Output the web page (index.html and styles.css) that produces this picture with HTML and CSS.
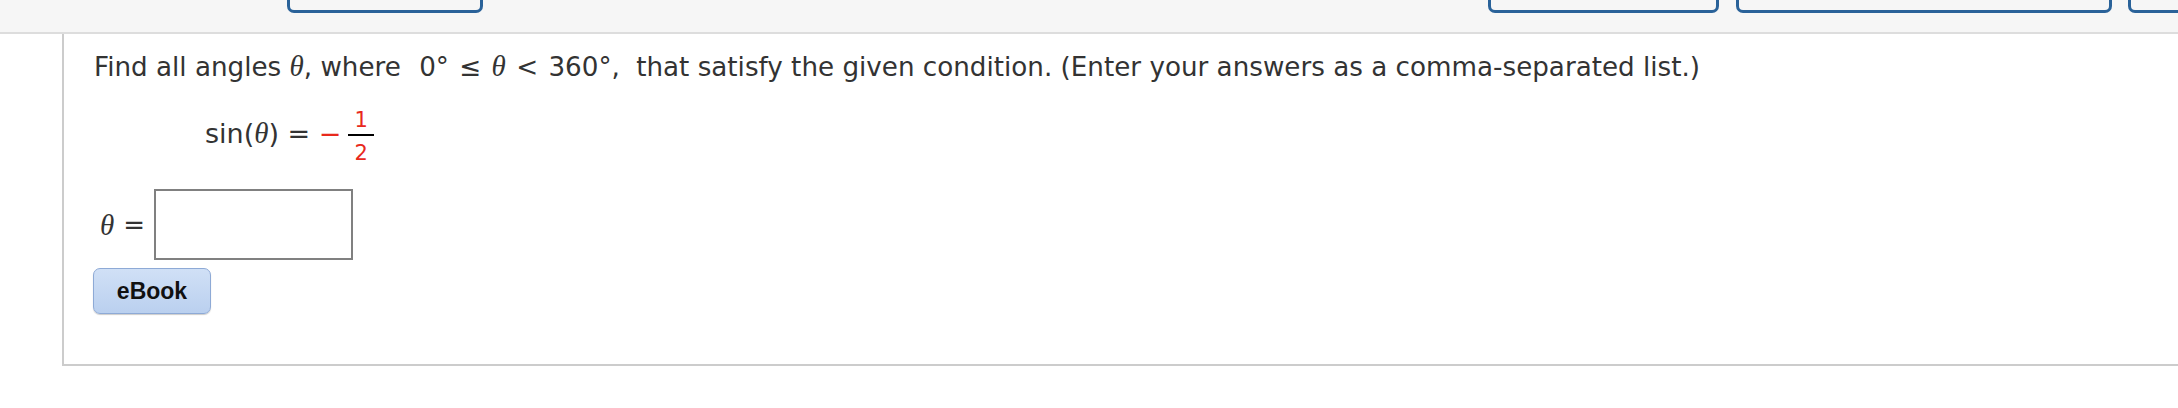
FILE: index.html
```html
<!DOCTYPE html>
<html>
<head>
<meta charset="utf-8">
<title>Question</title>
<link rel="stylesheet" href="styles.css">
</head>
<body>
<div class="topbar">
  <div class="tab tab1"></div>
  <div class="tab tab2"></div>
  <div class="tab tab3"></div>
  <div class="tab tab4"></div>
</div>
<div class="panel">
  <p class="question">Find all angles <i class="th">θ</i>, where <span class="math">0° <span class="rel">≤</span> <i class="th">θ</i> <span class="rel">&lt;</span> 360°</span>, <span class="math-gap"></span>that satisfy the given condition. (Enter your answers as a comma-separated list.)</p>
  <div class="eq">
    <span class="eq-text">sin(<i class="th">θ</i>) = <span class="red">−</span></span>
    <span class="frac"><span class="num">1</span><span class="den">2</span></span>
  </div>
  <div class="answer">
    <i class="th ans-theta">θ</i><span class="eqsign">=</span><input class="ans-input" type="text">
  </div>
  <button class="ebook" type="button">eBook</button>
</div>
</body>
</html>
```
FILE: styles.css
```css
body {
  margin: 0;
  background: #fff;
  font-family: "DejaVu Sans", Verdana, sans-serif;
  color: #333;
}

.topbar {
  height: 32px;
  background: #f6f6f6;
  border-bottom: 2px solid #ddd;
  display: flex;
  align-items: flex-start;
  overflow: hidden;
  padding-left: 287px;
}

.tab {
  flex: none;
  height: 10px;
  border: 3px solid #2a6299;
  border-top: 0;
  border-radius: 0 0 7px 7px;
}

.tab1 { width: 190px; }
.tab2 { width: 225px; margin-left: 1005px; }
.tab3 { width: 370px; margin-left: 17px; }
.tab4 { width: 100px; margin-left: 16px; }

.panel {
  margin-left: 62px;
  border-left: 2px solid #ccc;
  border-bottom: 2px solid #ccc;
  padding: 18px 0 50px 30px;
}

.question {
  margin: 0;
  font-size: 26.2px;
  line-height: 30px;
  white-space: nowrap;
}

.th {
  font-family: "Liberation Serif", serif;
  font-style: italic;
  font-size: 29px;
  line-height: 0;
}

.math {
  margin-left: 10px;
}

.rel {
  margin: 0 2px;
}

.math-gap {
  display: inline-block;
  width: 8px;
}

.eq {
  display: flex;
  align-items: flex-start;
  margin-top: 27px;
  padding-left: 111px;
}

.eq-text {
  font-size: 27px;
  line-height: 34px;
  margin-top: 8px;
  white-space: pre;
}

.red {
  color: #e8291c;
}

.frac {
  display: flex;
  flex-direction: column;
  align-items: center;
  margin-left: 7px;
  color: #e8291c;
  font-size: 21px;
  line-height: 22px;
}

.num {
  padding: 0 6px 3px;
  border-bottom: 2px solid #000;
}

.den {
  margin-top: 6px;
}

.answer {
  display: flex;
  align-items: center;
  margin-top: 25px;
}

.ans-theta {
  margin-left: 6px;
  line-height: 30px;
}

.eqsign {
  font-size: 26px;
  margin-left: 9px;
}

.ans-input {
  width: 195px;
  height: 67px;
  margin: 0 0 0 9px;
  padding: 0;
  border: 2px solid #808080;
  background: #fff;
}

.ebook {
  display: block;
  width: 118px;
  height: 46px;
  margin: 8px 0 0 -1px;
  padding: 0;
  border: 1px solid #8eaad6;
  border-radius: 7px;
  background: linear-gradient(#d0e0f6, #bad0ef);
  box-shadow: 0 1px 1px rgba(0, 0, 0, 0.2);
  font-family: "Liberation Sans", Arial, sans-serif;
  font-weight: bold;
  font-size: 23px;
  color: #111;
}
```
